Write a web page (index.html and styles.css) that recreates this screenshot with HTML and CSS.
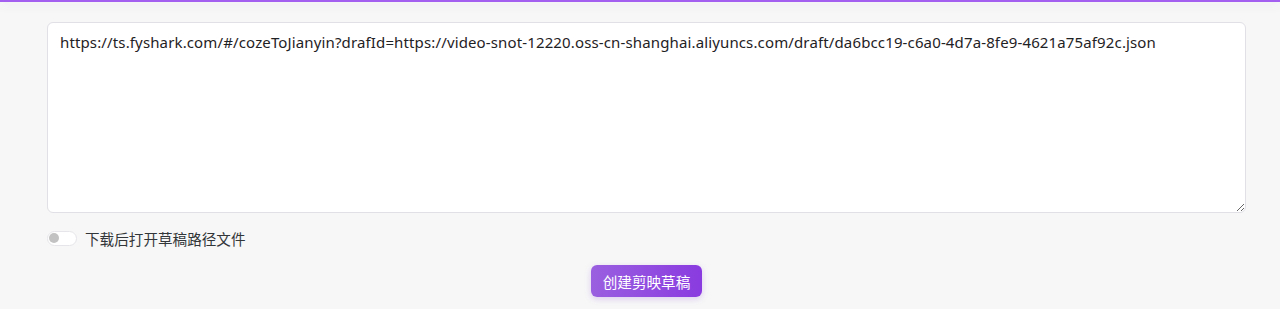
FILE: index.html
```html
<!DOCTYPE html>
<html lang="zh">
<head>
<meta charset="utf-8">
<title>创建剪映草稿</title>
<link rel="stylesheet" href="styles.css">
</head>
<body>
<div class="topbar"></div>
<main class="panel">
  <textarea class="url-input" spellcheck="false">https://ts.fyshark.com/#/cozeToJianyin?drafId=https://video-snot-12220.oss-cn-shanghai.aliyuncs.com/draft/da6bcc19-c6a0-4d7a-8fe9-4621a75af92c.json</textarea>
  <label class="option">
    <span class="switch"><span class="knob"></span></span>
    <span class="option-text">下载后打开草稿路径文件</span>
  </label>
  <div class="actions">
    <button class="primary-btn">创建剪映草稿</button>
  </div>
</main>
</body>
</html>
```
FILE: styles.css
```css
* { box-sizing: border-box; }
html, body {
  margin: 0;
  height: 100%;
}
body {
  background: #f7f7f7;
  font-family: "Noto Sans", "Noto Sans CJK SC", sans-serif;
  font-size: 14px;
  color: #333639;
  overflow: hidden;
}
.topbar {
  height: 2px;
  background: #a25ff0;
  box-shadow: 0 2px 10px rgba(140, 100, 200, 0.18);
}
.panel {
  padding: 20px 34px 0 47px;
  display: flex;
  flex-direction: column;
}
.url-input {
  width: 1199px;
  height: 191px;
  border: 1px solid #e0e0e6;
  border-radius: 6px;
  background: #fff;
  padding: 8px 12px;
  font-family: inherit;
  font-size: 15px;
  letter-spacing: 0.135px;
  line-height: 22px;
  color: #1f2225;
  resize: vertical;
  outline: none;
}
.option {
  display: flex;
  align-items: center;
  gap: 8px;
  margin-top: 17px;
  height: 16px;
}
.switch {
  width: 30px;
  height: 15px;
  border: 1px solid #e6e6ea;
  border-radius: 8px;
  background: #fff;
  display: flex;
  align-items: center;
  padding-left: 1px;
}
.knob {
  width: 10px;
  height: 10px;
  border-radius: 50%;
  background: #c2c2c2;
}
.option-text {
  font-size: 14.6px;
  color: #333639;
}
.actions {
  display: flex;
  justify-content: center;
  margin-top: 19px;
}
.primary-btn {
  width: 111px;
  height: 32px;
  border: none;
  border-radius: 6px;
  background: linear-gradient(90deg, #9a5fe0 0%, #8a3be0 100%);
  color: #fff;
  font-family: inherit;
  font-size: 14.6px;
  box-shadow: 0 2px 6px rgba(138, 80, 220, 0.25);
  cursor: pointer;
}
```
